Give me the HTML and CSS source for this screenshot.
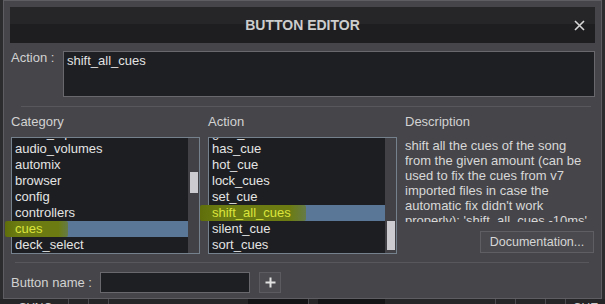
FILE: index.html
```html
<!DOCTYPE html>
<html lang="en">
<head>
  <meta charset="UTF-8" />
  <title>Button Editor</title>
  <link rel="stylesheet" href="styles.css">
</head>
<body>

  <div class="dialog">
    <div class="titlebar">
      <span class="title">BUTTON EDITOR</span>
      <svg class="close" width="11" height="11" viewBox="0 0 11 11">
        <path d="M1 1 L10 10 M10 1 L1 10" stroke="#d6d6d6" stroke-width="1.6" fill="none"/>
      </svg>
    </div>

    <div class="content">
      <div class="action-row">
        <span class="label">Action :</span>
        <div class="textbox">shift_all_cues</div>
      </div>

      <div class="sep"></div>

      <div class="columns">
        <div class="col">
          <div class="col-title">Category</div>
          <div class="listbox">
            <ul class="items">
              <li>audio_inputs</li>
              <li>audio_volumes</li>
              <li>automix</li>
              <li>browser</li>
              <li>config</li>
              <li>controllers</li>
              <li class="sel"><span>cues</span></li>
              <li>deck_select</li>
            </ul>
            <div class="track"><div class="thumb thumb-cat"></div></div>
          </div>
          <div class="marker marker-cat"></div>
        </div>

        <div class="col">
          <div class="col-title">Action</div>
          <div class="listbox">
            <ul class="items">
              <li>goto_cue</li>
              <li>has_cue</li>
              <li>hot_cue</li>
              <li>lock_cues</li>
              <li>set_cue</li>
              <li class="sel"><span>shift_all_cues</span></li>
              <li>silent_cue</li>
              <li>sort_cues</li>
            </ul>
            <div class="track"><div class="thumb thumb-act"></div></div>
          </div>
          <div class="marker marker-act"></div>
        </div>

        <div class="col">
          <div class="col-title">Description</div>
          <div class="desc">shift all the cues of the song from the given amount (can be used to fix the cues from v7 imported files in case the automatic fix didn't work properly): 'shift_all_cues -10ms'</div>
          <button class="doc-btn">Documentation...</button>
        </div>
      </div>

      <div class="sep sep-bottom"></div>

      <div class="name-row">
        <span class="label name-label">Button name :</span>
        <div class="name-input"></div>
        <div class="plus-btn">
          <svg width="11" height="11" viewBox="0 0 11 11">
            <path d="M5.5 0.5 V10.5 M0.5 5.5 H10.5" stroke="#e2e2e2" stroke-width="2" fill="none"/>
          </svg>
        </div>
      </div>
    </div>
  </div>

  <div class="deckbar">
    <div class="cell cell-sync">SYNC</div>
    <div class="cell cell-s"></div>
    <div class="cell cell-s"></div>
    <div class="cell cell-plus">+</div>
    <div class="fill"></div>
    <div class="screen"></div>
    <div class="cell cell-xs"></div>
    <div class="screen screen-b"></div>
    <div class="fill"></div>
    <div class="cell cell-s"></div>
    <div class="cell cell-plus">+</div>
    <div class="cell cell-s"></div>
    <div class="cell cell-cue">CUE</div>
  </div>

</body>
</html>
```

FILE: styles.css
```css
* {
  margin: 0;
  padding: 0;
  box-sizing: border-box;
}

body {
  width: 605px;
  height: 304px;
  overflow: hidden;
  background: #2c2c2e;
  font-family: "Liberation Sans", Arial, sans-serif;
  font-size: 13px;
  color: #d0d0d0;
}

.dialog {
  margin-left: 3px;
  width: 599px;
  height: 299px;
  border: 1px solid #5e5e62;
  background: #46464a;
  padding: 6px 6px 0;
}

.titlebar {
  position: relative;
  height: 36px;
  background: linear-gradient(to bottom, #262629 0, #262629 47%, #1e1e21 47%, #1e1e21 100%);
  text-align: center;
}

.title {
  line-height: 36px;
  font-size: 14px;
  font-weight: bold;
  color: #cdcdcd;
}

.close {
  position: absolute;
  right: 10px;
  top: 13px;
}

.content {
  padding: 0 0 0 1px;
}

.label {
  color: #d2d2d2;
  line-height: 16px;
}

.action-row {
  display: flex;
  margin-top: 8px;
}

.action-row .label {
  width: 52px;
  margin-top: -1px;
}

.textbox {
  flex: 1;
  height: 46px;
  background: #1e1f22;
  border: 1px solid #69696d;
  padding: 0 3px;
  line-height: 17px;
  color: #e2e2e2;
}

.sep {
  height: 1px;
  background: #58585c;
  margin: 9px 4px 0 10px;
}

.columns {
  display: grid;
  grid-template-columns: 189px 189px 189px;
  gap: 8px;
  margin-top: 7px;
}

.col {
  position: relative;
  display: flex;
  flex-direction: column;
}

.col-title {
  line-height: 16px;
  color: #d2d2d2;
  margin-bottom: 7px;
}

.listbox {
  display: flex;
  height: 117px;
  border: 1px solid #76818e;
  background: #1d1e21;
  overflow: hidden;
}

.items {
  flex: 1;
  list-style: none;
  margin-top: -13px;
}

.items li {
  height: 16px;
  line-height: 16px;
  padding-left: 3px;
  color: #e4e4e4;
  white-space: nowrap;
}

.items li.sel {
  background: #5a7797;
}

.items li.sel span {
  position: relative;
  z-index: 2;
  color: #dbe43c;
}

.track {
  width: 11px;
  background: #424246;
}

.thumb {
  width: 8px;
  margin-left: 2px;
  background: #cbcbd0;
}

.thumb-cat {
  margin-top: 34px;
  height: 21px;
}

.thumb-act {
  margin-top: 83px;
  height: 29px;
}

.marker {
  position: absolute;
  z-index: 1;
  height: 16px;
  background: linear-gradient(to right, #5f6e0a 0, #6c7c12 20%, #6c7c12 85%, rgba(108, 124, 18, 0.6) 100%);
  border-radius: 2px;
}

.marker-cat {
  top: 107px;
  left: -6px;
  width: 63px;
}

.marker-act {
  top: 91px;
  left: -8px;
  width: 106px;
}

.desc {
  width: 188px;
  height: 85px;
  overflow: hidden;
  line-height: 15px;
  padding-top: 1px;
  color: #d8d8d8;
}

.doc-btn {
  align-self: flex-end;
  margin-top: 9px;
  width: 114px;
  height: 22px;
  background: #4a4a4e;
  border: 1px solid #5f5f63;
  color: #d6d6d6;
  font-family: "Liberation Sans", Arial, sans-serif;
  font-size: 12.5px;
}

.sep-bottom {
  margin: 8px 6px 0 4px;
}

.name-row {
  display: flex;
  align-items: center;
  margin-top: 9px;
}

.name-label {
  width: 89px;
}

.name-input {
  width: 150px;
  height: 21px;
  background: #1e1f22;
  border: 1px solid #69696d;
}

.plus-btn {
  display: flex;
  align-items: center;
  justify-content: center;
  width: 22px;
  height: 21px;
  margin-left: 9px;
  background: #4c4c50;
  border: 1px solid #5c5c60;
}

.deckbar {
  display: flex;
  height: 5px;
  overflow: hidden;
  background: #252527;
  padding-left: 3px;
  font-size: 12px;
  color: #c8c8c8;
}

.cell {
  border-left: 1px solid #4a4a4e;
  text-align: center;
  line-height: 14px;
  padding-top: 2px;
}

.cell-sync {
  width: 65px;
  border-left: none;
}

.cell-s {
  width: 20px;
}

.cell-xs {
  width: 10px;
}

.cell-plus {
  width: 30px;
  font-weight: bold;
}

.cell-cue {
  width: 40px;
}

.fill {
  flex: 1;
}

.screen {
  width: 60px;
  background: #141416;
}

.screen-b {
  width: 67px;
}
```
